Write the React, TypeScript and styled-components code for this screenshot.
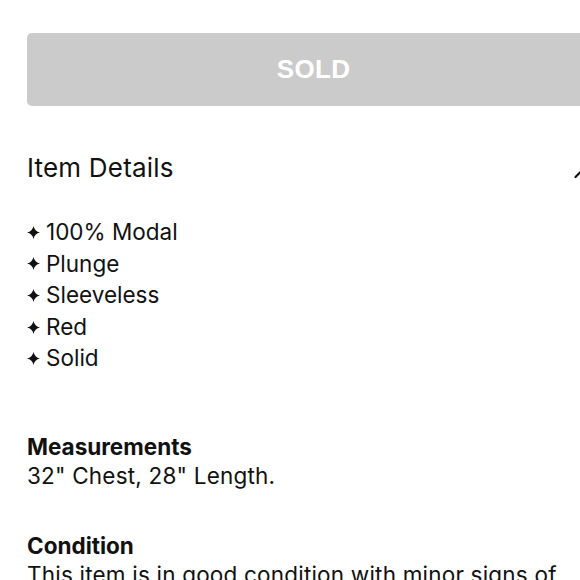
import React from "react";
import styled, { createGlobalStyle } from "styled-components";

const Global = createGlobalStyle`
  html, body { margin: 0; padding: 0; background: #fff; overflow: hidden; }
  body { font-family: Inter, "Liberation Sans", sans-serif; color: #111; }
`;

const Page = styled.div`
  width: 627px;
  padding: 33px 27px 0 27px;
  box-sizing: border-box;
  display: flex;
  flex-direction: column;
`;

const SoldButton = styled.button`
  height: 73px;
  width: 100%;
  border: none;
  border-radius: 5px;
  background: #cbcbcb;
  color: #fff;
  font-family: "Liberation Sans", Arial, sans-serif;
  font-weight: 700;
  font-size: 26px;
  letter-spacing: 0.3px;
  padding: 0;
`;

const Header = styled.div`
  margin-top: 46px;
  display: flex;
  align-items: center;
  justify-content: space-between;
  height: 32px;
`;

const Title = styled.h2`
  margin: 0;
  font-size: 26px;
  font-weight: 400;
  line-height: 32px;
  letter-spacing: 0.2px;
`;

const Chevron = styled.svg`
  flex: none;
`;

const List = styled.ul`
  list-style: none;
  margin: 32px 0 0 0;
  padding: 0;
`;

const Item = styled.li`
  font-size: 22.5px;
  line-height: 31.6px;
  display: flex;
  align-items: center;
`;

const Star = styled.svg`
  flex: none;
  margin: 1px 6px 0 0;
`;

const Section = styled.div<{ $gap: number }>`
  margin-top: ${(p) => p.$gap}px;
`;

const Label = styled.div`
  font-size: 22.5px;
  font-weight: 700;
  line-height: 29px;
`;

const Body = styled.div`
  font-size: 22.5px;
  line-height: 29px;
  letter-spacing: 0.2px;
`;

const items = ["100% Modal", "Plunge", "Sleeveless", "Red", "Solid"];

export default function App() {
  return (
    <>
      <Global />
      <Page>
        <SoldButton>SOLD</SoldButton>
        <Header>
          <Title>Item Details</Title>
          <Chevron width="26" height="24" viewBox="0 0 26 24" fill="none" stroke="#111" strokeWidth="2.2" strokeLinecap="round" strokeLinejoin="round">
            <polyline points="1.5,21 13,9.5 24.5,21" />
          </Chevron>
        </Header>
        <List>
          {items.map((t) => (
            <Item key={t}>
              <Star width="13" height="13" viewBox="0 0 13 13">
                <path d="M6.5 0 Q7.6 5.4 13 6.5 Q7.6 7.6 6.5 13 Q5.4 7.6 0 6.5 Q5.4 5.4 6.5 0 Z" fill="#111" />
              </Star>
              {t}
            </Item>
          ))}
        </List>
        <Section $gap={58}>
          <Label>Measurements</Label>
          <Body>32" Chest, 28" Length.</Body>
        </Section>
        <Section $gap={41}>
          <Label>Condition</Label>
          <Body>This item is in good condition with minor signs of wear.</Body>
        </Section>
      </Page>
    </>
  );
}
